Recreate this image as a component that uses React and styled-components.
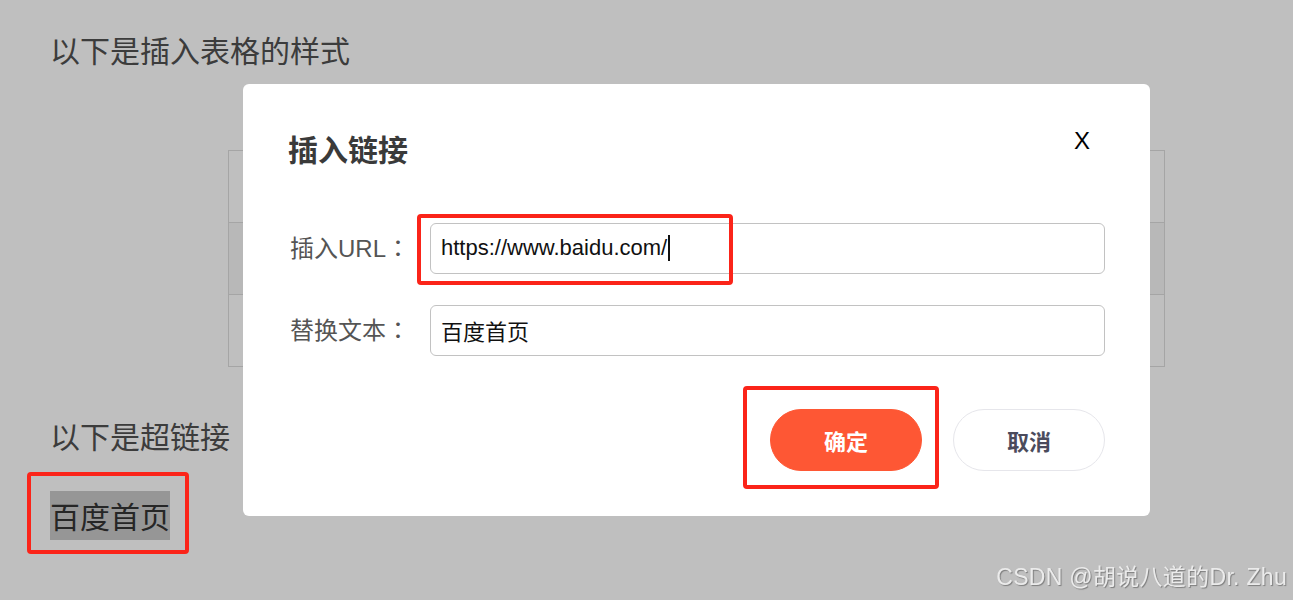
import React from 'react'
import styled, { createGlobalStyle } from 'styled-components'

const GlobalStyle = createGlobalStyle`
  html, body {
    margin: 0;
    padding: 0;
    background: #ffffff;
  }
  body {
    font-family: "Noto Sans CJK SC", "Liberation Sans", sans-serif;
  }
`

const Page = styled.div`
  min-height: 100vh;
  box-sizing: border-box;
  padding: 27px 50px 0 50px;
  color: #505050;
`

const Heading = styled.div`
  font-size: 30px;
  line-height: 45px;
  margin-top: ${(p) => p.$gap || 0}px;
`

const Table = styled.table`
  width: 937px;
  margin: 78px 0 0 178px;
  border-collapse: collapse;

  td {
    height: 69px;
    border: 1px solid #dddddd;
  }

  tr:nth-child(2) td {
    background: #f6f6f6;
  }
`

const LinkWrap = styled.div`
  margin-top: 33px;
`

const Highlight = styled.span`
  position: relative;
  display: inline-block;
  height: 49px;
  line-height: 49px;
  font-size: 30px;
  color: #333333;
  background: #c8c8c8;
`

const Mark = styled.span`
  position: absolute;
  z-index: 30;
  top: ${(p) => p.$top}px;
  left: ${(p) => p.$left}px;
  width: ${(p) => p.$w}px;
  height: ${(p) => p.$h}px;
  box-sizing: border-box;
  border: 4px solid #fb2419;
  border-radius: 4px;
  pointer-events: none;
`

const Overlay = styled.div`
  position: fixed;
  inset: 0;
  z-index: 10;
  background: rgba(0, 0, 0, 0.25);
  display: flex;
  align-items: center;
  justify-content: center;
  padding: 0 0 1px 100px;
`

const Modal = styled.div`
  width: 907px;
  box-sizing: border-box;
  padding: 45px;
  background: #ffffff;
  border-radius: 6px;
`

const Header = styled.div`
  display: flex;
  justify-content: space-between;
  align-items: flex-start;
  height: 45px;
`

const Title = styled.div`
  font-size: 30px;
  line-height: 39px;
  font-weight: 700;
  color: #3a3a3a;
`

const Close = styled.div`
  font-family: "Liberation Sans", sans-serif;
  font-size: 24px;
  line-height: 24px;
  color: #000000;
  margin-right: 15px;
`

const Form = styled.div`
  display: grid;
  grid-template-columns: 142px 1fr;
  row-gap: 31px;
  align-items: center;
  margin-top: 49px;
`

const Label = styled.div`
  font-family: "Liberation Sans", "Noto Sans CJK SC", sans-serif;
  font-size: 24px;
  color: #555555;
  padding: 0 0 4px 2px;
`

const Colon = styled.span`
  font-family: "Noto Sans CJK TC", sans-serif;
`

const Field = styled.div`
  position: relative;
  height: 51px;
  box-sizing: border-box;
  display: flex;
  align-items: center;
  padding: 0 10px;
  border: 1px solid #c2c2c2;
  border-radius: 6px;
  font-family: ${(p) =>
    p.$latin ? '"Liberation Sans", sans-serif' : '"Noto Sans CJK SC", sans-serif'};
  font-size: 22px;
  color: #111111;
`

const Caret = styled.span`
  display: inline-block;
  width: 2px;
  height: 26px;
  margin-left: 1px;
  background: #111111;
`

const Footer = styled.div`
  display: flex;
  justify-content: flex-end;
  gap: 31px;
  margin-top: 53px;
`

const Button = styled.div`
  position: relative;
  width: 152px;
  height: 62px;
  box-sizing: border-box;
  display: flex;
  align-items: center;
  justify-content: center;
  border-radius: 31px;
  font-size: 22px;
  font-weight: 700;
  background: ${(p) => (p.$primary ? '#fe5734' : '#ffffff')};
  color: ${(p) => (p.$primary ? '#ffffff' : '#4b4b5c')};
  border: 1px solid ${(p) => (p.$primary ? '#fe5734' : '#e6e6eb')};
`

const Watermark = styled.div`
  position: fixed;
  right: 6px;
  bottom: 8px;
  z-index: 40;
  font-family: "Liberation Sans", "Noto Sans CJK SC", sans-serif;
  font-size: 23px;
  letter-spacing: 0.3px;
  color: #ebebeb;
  text-shadow: 1px 1px 1px rgba(0, 0, 0, 0.35);
`

function App() {
    return (
        <React.Fragment>
            <GlobalStyle />
            <Page>
                <Heading>以下是插入表格的样式</Heading>
                <Table>
                    <tbody>
                        {[0, 1, 2].map((r) => (
                            <tr key={r}>
                                <td />
                                <td />
                                <td />
                            </tr>
                        ))}
                    </tbody>
                </Table>
                <Heading $gap={46}>以下是超链接</Heading>
                <LinkWrap>
                    <Highlight>
                        百度首页
                        <Mark $top={-19} $left={-23} $w={162} $h={82} />
                    </Highlight>
                </LinkWrap>
            </Page>

            <Overlay>
                <Modal>
                    <Header>
                        <Title>插入链接</Title>
                        <Close>X</Close>
                    </Header>
                    <Form>
                        <Label>
                            插入URL<Colon>：</Colon>
                        </Label>
                        <Field $latin>
                            https://www.baidu.com/
                            <Caret />
                            <Mark $top={-10} $left={-14} $w={316} $h={71} />
                        </Field>
                        <Label>
                            替换文本<Colon>：</Colon>
                        </Label>
                        <Field>百度首页</Field>
                    </Form>
                    <Footer>
                        <Button $primary>
                            确定
                            <Mark $top={-24} $left={-28} $w={196} $h={103} />
                        </Button>
                        <Button>取消</Button>
                    </Footer>
                </Modal>
            </Overlay>

            <Watermark>CSDN @胡说八道的Dr. Zhu</Watermark>
        </React.Fragment>
    )
}

export default App
